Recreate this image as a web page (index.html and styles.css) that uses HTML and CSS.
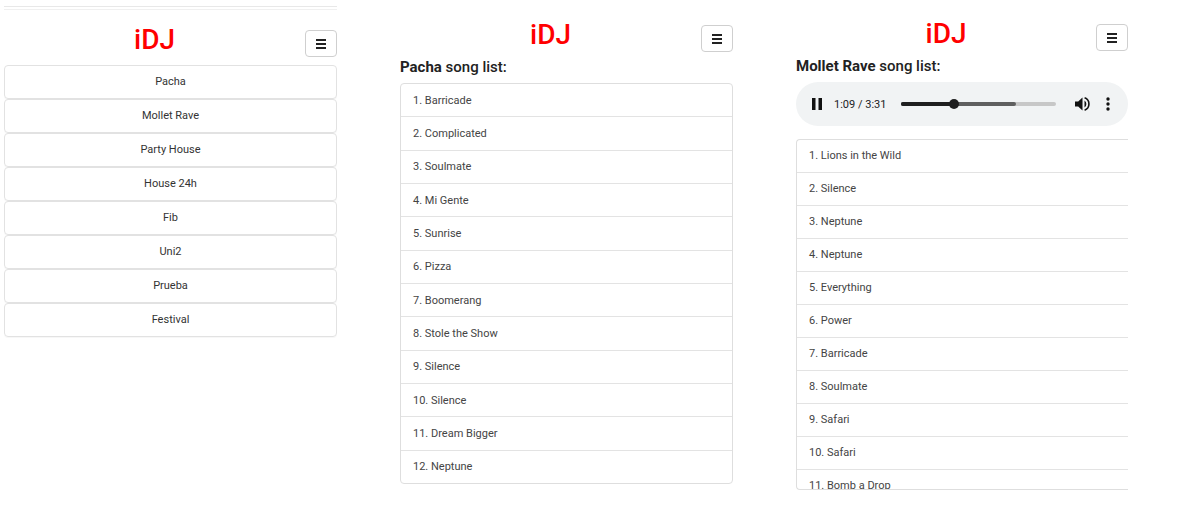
FILE: index.html
```html
<!DOCTYPE html>
<html lang="es">
<head>
<meta charset="utf-8">
<title>iDJ</title>
<link rel="stylesheet" href="styles.css">
</head>
<body>
<div class="screens">
  <section class="panel panel-clubs">
    <div class="divider"></div>
    <header class="header">
      <h1 class="logo">iDJ</h1>
      <button class="menu-btn" aria-label="menu">
        <svg width="10" height="10" viewBox="0 0 10 10"><rect x="0" y="0" width="10" height="2" fill="#222"/><rect x="0" y="4" width="10" height="2" fill="#222"/><rect x="0" y="8" width="10" height="2" fill="#222"/></svg>
      </button>
    </header>
    <ul class="clubs">
      <li class="club">Pacha</li>
      <li class="club">Mollet Rave</li>
      <li class="club">Party House</li>
      <li class="club">House 24h</li>
      <li class="club">Fib</li>
      <li class="club">Uni2</li>
      <li class="club">Prueba</li>
      <li class="club">Festival</li>
    </ul>
  </section>

  <section class="panel panel-songs">
    <header class="header">
      <h1 class="logo">iDJ</h1>
      <button class="menu-btn" aria-label="menu">
        <svg width="10" height="10" viewBox="0 0 10 10"><rect x="0" y="0" width="10" height="2" fill="#222"/><rect x="0" y="4" width="10" height="2" fill="#222"/><rect x="0" y="8" width="10" height="2" fill="#222"/></svg>
      </button>
    </header>
    <h2 class="list-title"><b>Pacha</b> song list:</h2>
    <ul class="songs songs-full">
      <li class="song">1. Barricade</li>
      <li class="song">2. Complicated</li>
      <li class="song">3. Soulmate</li>
      <li class="song">4. Mi Gente</li>
      <li class="song">5. Sunrise</li>
      <li class="song">6. Pizza</li>
      <li class="song">7. Boomerang</li>
      <li class="song">8. Stole the Show</li>
      <li class="song">9. Silence</li>
      <li class="song">10. Silence</li>
      <li class="song">11. Dream Bigger</li>
      <li class="song">12. Neptune</li>
    </ul>
  </section>

  <section class="panel panel-player">
    <header class="header header-up">
      <h1 class="logo">iDJ</h1>
      <button class="menu-btn" aria-label="menu">
        <svg width="10" height="10" viewBox="0 0 10 10"><rect x="0" y="0" width="10" height="2" fill="#222"/><rect x="0" y="4" width="10" height="2" fill="#222"/><rect x="0" y="8" width="10" height="2" fill="#222"/></svg>
      </button>
    </header>
    <h2 class="list-title"><b>Mollet Rave</b> song list:</h2>
    <div class="player">
      <svg class="pause" width="10" height="12" viewBox="0 0 10 12"><rect x="0" y="0" width="3.5" height="12" fill="#111"/><rect x="6.5" y="0" width="3.5" height="12" fill="#111"/></svg>
      <span class="time">1:09 / 3:31</span>
      <div class="track">
        <div class="buffered"></div>
        <div class="played"></div>
        <div class="thumb"></div>
      </div>
      <svg class="volume" width="16" height="14" viewBox="0 0 16 14"><path d="M0 4.5h3.2L7.5 0.6v12.8L3.2 9.5H0z" fill="#111"/><path d="M9.5 3.6a4 4 0 0 1 0 6.8z" fill="#111"/><path d="M9.6 0.8a6.6 6.6 0 0 1 0 12.4" fill="none" stroke="#111" stroke-width="1.6"/></svg>
      <svg class="dots" width="4" height="14" viewBox="0 0 4 14"><circle cx="2" cy="2" r="1.7" fill="#111"/><circle cx="2" cy="7" r="1.7" fill="#111"/><circle cx="2" cy="12" r="1.7" fill="#111"/></svg>
    </div>
    <ul class="songs songs-scroll">
      <li class="song">1. Lions in the Wild</li>
      <li class="song">2. Silence</li>
      <li class="song">3. Neptune</li>
      <li class="song">4. Neptune</li>
      <li class="song">5. Everything</li>
      <li class="song">6. Power</li>
      <li class="song">7. Barricade</li>
      <li class="song">8. Soulmate</li>
      <li class="song">9. Safari</li>
      <li class="song">10. Safari</li>
      <li class="song">11. Bomb a Drop</li>
    </ul>
  </section>
</div>
</body>
</html>
```
FILE: styles.css
```css
* { box-sizing: border-box; }
html, body {
  margin: 0;
  padding: 0;
  background: #fff;
  font-family: Roboto, "Liberation Sans", Arial, sans-serif;
  color: #212529;
}
.screens {
  display: flex;
  gap: 63px;
  padding-left: 4px;
}
.panel {
  display: flex;
  flex-direction: column;
  width: 333px;
}
.panel-player { width: 332px; }

.divider {
  margin-top: 6px;
  height: 4px;
  border-top: 1px solid #e8e8e8;
  border-bottom: 1px solid #f0f0f0;
}
.header {
  display: flex;
  align-items: flex-end;
  margin-top: 18px;
  height: 34px;
}
.panel-clubs .header { margin-top: 13px; }
.header-up { margin-top: 17px; }
.logo {
  flex: 1;
  margin: 0;
  text-align: center;
  font-size: 28px;
  line-height: 34px;
  font-weight: 500;
  color: #ff0000;
}
.menu-btn {
  width: 32px;
  height: 27px;
  padding: 0;
  display: flex;
  align-items: center;
  justify-content: center;
  background: #fff;
  border: 1px solid #cfcfcf;
  border-radius: 4px;
}
.menu-btn svg { display: block; }

.clubs {
  list-style: none;
  margin: 8px 0 0;
  padding: 0;
}
.club {
  height: 34px;
  line-height: 32px;
  text-align: center;
  font-size: 11px;
  color: #333;
  border: 1px solid #e2e2e2;
  border-radius: 4px;
  box-shadow: 0 1px 0 rgba(0,0,0,0.03);
}

.list-title {
  margin: 6px 0 7px;
  font-size: 15px;
  line-height: 18px;
  font-weight: 500;
  color: #222;
}
.list-title b { font-weight: 700; }

.songs {
  list-style: none;
  margin: 0;
  padding: 0;
  border: 1px solid #dedede;
  border-radius: 4px;
}
.songs-full {
  height: 401px;
  display: flex;
  flex-direction: column;
}
.songs-full .song { flex: 1; }
.songs-full .song + .song { border-top: 1px solid #e3e3e3; }
.song {
  display: flex;
  align-items: center;
  padding: 0 12px;
  font-size: 11px;
  color: #444;
}
.songs-scroll {
  margin-top: 13px;
  height: 351px;
  overflow: hidden;
  border-right: 0;
  border-radius: 4px 0 0 4px;
}
.songs-scroll .song {
  height: 33px;
  padding-bottom: 2px;
  border-bottom: 1px solid #e3e3e3;
}

.player {
  display: flex;
  align-items: center;
  height: 44px;
  padding: 0 15px 0 16px;
  background: #f1f3f4;
  border-radius: 22px;
}
.pause { flex: none; margin-right: 12px; }
.time {
  font-size: 11px;
  color: #202124;
  white-space: nowrap;
  margin-right: 15px;
}
.track {
  position: relative;
  width: 155px;
  height: 4px;
  border-radius: 2px;
  background: #c7c7c7;
  margin-right: 19px;
}
.buffered {
  width: 115px;
  height: 100%;
  border-radius: 2px;
  background: #5f5f5f;
}
.played {
  position: absolute;
  left: 0;
  top: 0;
  width: 53px;
  height: 100%;
  border-radius: 2px;
  background: #1f1f1f;
}
.thumb {
  position: absolute;
  left: 48px;
  top: -3px;
  width: 10px;
  height: 10px;
  border-radius: 50%;
  background: #1f1f1f;
}
.volume { flex: none; margin-right: 15px; }
.dots { flex: none; }
```
